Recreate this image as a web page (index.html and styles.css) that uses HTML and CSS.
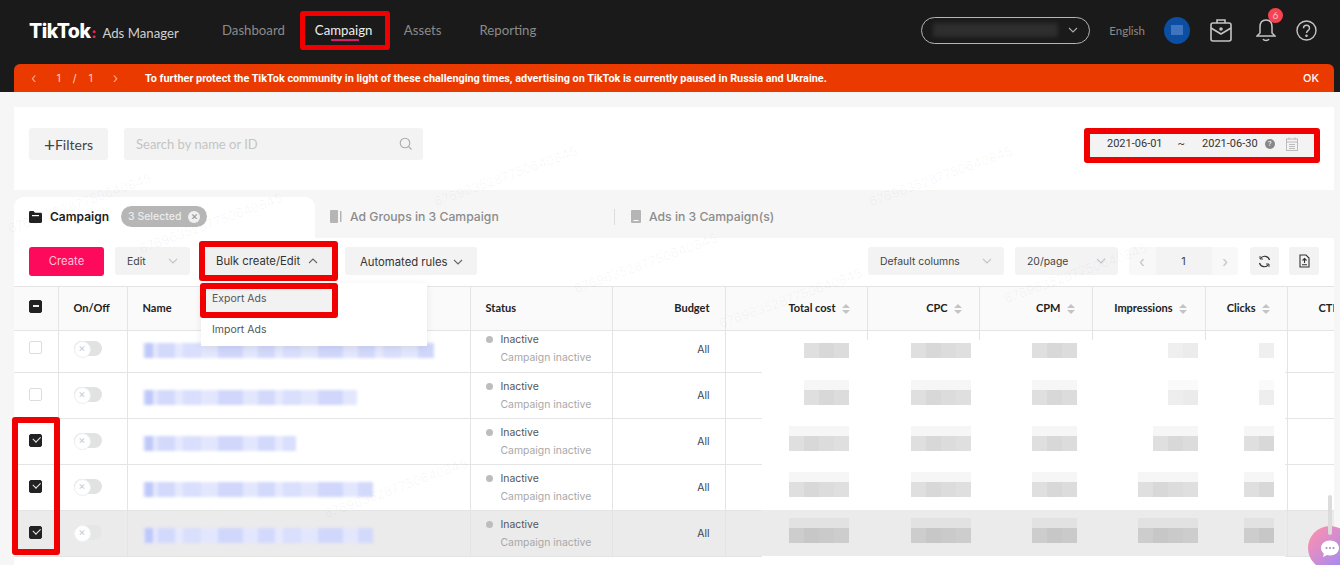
FILE: index.html
```html
<!DOCTYPE html>
<html lang="en">
<head>
    <meta charset="UTF-8">
    <title>TikTok Ads Manager - Campaign</title>
    <link rel="stylesheet" href="styles.css">
</head>
<body>
    <div class="top-wrap">
        <div class="topbar">
            <div class="logo"><b>TikTok</b><span class="logo-dot">:</span><span class="logo-sub">Ads Manager</span></div>
            <nav class="nav">
                <a>Dashboard</a>
                <a class="nav-active marked"><span>Campaign</span></a>
                <a>Assets</a>
                <a>Reporting</a>
            </nav>
            <div class="top-right">
                <div class="account">
                    <span class="account-blur"></span>
                    <svg width="10" height="6" viewBox="0 0 10 6"><path d="M1 1l4 4 4-4" fill="none" stroke="#aaa" stroke-width="1.1"/></svg>
                </div>
                <span class="lang">English</span>
                <span class="avatar"><i></i></span>
                <svg class="ic-case" width="24" height="26" viewBox="0 0 24 26" fill="none" stroke="#c4c4c4" stroke-width="1.6"><path d="M8 6V3h8v3"/><rect x="2" y="6" width="20" height="18" rx="2"/><path d="M2 11l10 6 10-6"/><circle cx="12" cy="12" r="1" fill="#c4c4c4"/></svg>
                <span class="bell">
                    <svg width="20" height="26" viewBox="0 0 20 26" fill="none" stroke="#c4c4c4" stroke-width="1.5"><path d="M10 3c-4 0-6 3-6 7v6l-3 3h18l-3-3v-6c0-4-2-7-6-7z"/><path d="M7 22c1 2 5 2 6 0"/></svg>
                    <em>6</em>
                </span>
                <svg class="ic-help" width="21" height="21" viewBox="0 0 21 21" fill="none" stroke="#c4c4c4" stroke-width="1.4"><circle cx="10.5" cy="10.5" r="9.5"/><path d="M7.5 8.2c0-4 6-4 6 0 0 2.400-3 2.400-3 4.800"/><circle cx="10.500" cy="15.800" r=".6" fill="#c4c4c4"/></svg>
            </div>
        </div>
        <div class="notice">
            <div class="notice-pager"><span>&lsaquo;</span><span>1</span><span>/</span><span>1</span><span>&rsaquo;</span></div>
            <p>To further protect the TikTok community in light of these challenging times, advertising on TikTok is currently paused in Russia and Ukraine.</p>
            <b>OK</b>
        </div>
    </div>

    <main class="content">
        <section class="filter-card">
            <button class="filters-btn"><span>+</span>Filters</button>
            <div class="search">
                <span>Search by name or ID</span>
                <svg width="14" height="14" viewBox="0 0 14 14" fill="none" stroke="#aaa" stroke-width="1.1"><circle cx="6" cy="6" r="4.800"/><path d="M9.500 9.500l3 3"/></svg>
            </div>
            <div class="date-range marked">
                <span>2021-06-01</span>
                <span class="tilde">~</span>
                <span>2021-06-30</span>
                <i class="date-q">?</i>
                <svg width="12" height="14" viewBox="0 0 12 14" fill="none" stroke="#b5b5b5" stroke-width=".9"><rect x=".5" y="2" width="11" height="11.500"/><path d="M.5 5h11M3 .5v2M9 .5v2M3 7.500h6M3 9.500h6M3 11.500h6"/></svg>
            </div>
        </section>

        <div class="tabs">
            <div class="tab tab-active">
                <svg width="13" height="12" viewBox="0 0 13 12"><path d="M0 1.500C0 .7.600 0 1.400 0h3.100l1.500 1.800h5.600c.8 0 1.400.6 1.400 1.400v7.400c0 .8-.6 1.400-1.400 1.400H1.400C.6 12 0 11.400 0 10.600z" fill="#222"/><rect x="3" y="4" width="7" height="1.200" fill="#fff"/></svg>
                <span>Campaign</span>
                <span class="pill">3 Selected <i>&times;</i></span>
            </div>
            <div class="tab tab-groups">
                <svg width="12" height="13" viewBox="0 0 12 13"><rect width="8" height="13" rx="1" fill="#b5b5b5"/><rect x="10" y="1" width="1.500" height="11" fill="#b5b5b5"/></svg>
                <span>Ad Groups in 3 Campaign</span>
            </div>
            <div class="tab tab-ads">
                <svg width="10" height="13" viewBox="0 0 10 13"><rect width="10" height="13" rx="1" fill="#b5b5b5"/><rect x="2.500" y="10" width="5" height="1" fill="#fff"/></svg>
                <span>Ads in 3 Campaign(s)</span>
            </div>
        </div>

        <div class="toolbar">
            <button class="btn-create">Create</button>
            <div class="select select-edit"><span>Edit</span><svg class="chev" viewBox="0 0 10 6"><path d="M1 1l4 4 4-4"/></svg></div>
            <div class="bulk">
                <div class="bulk-btn marked"><span>Bulk create/Edit</span><svg class="chev chev-dark" viewBox="0 0 10 6"><path d="M1 5l4-4 4 4"/></svg></div>
                <div class="dropdown">
                    <div class="drop-item drop-export marked">Export Ads</div>
                    <div class="drop-item">Import Ads</div>
                </div>
            </div>
            <div class="select select-rules"><span>Automated rules</span><svg class="chev chev-dark" viewBox="0 0 10 6"><path d="M1 1l4 4 4-4"/></svg></div>
            <div class="tool-right">
                <div class="select select-cols"><span>Default columns</span><svg class="chev" viewBox="0 0 10 6"><path d="M1 1l4 4 4-4"/></svg></div>
                <div class="select select-page"><span>20/page</span><svg class="chev" viewBox="0 0 10 6"><path d="M1 1l4 4 4-4"/></svg></div>
                <div class="pager"><span>&lsaquo;</span><b>1</b><span>&rsaquo;</span></div>
                <div class="icon-btn">
                    <svg width="13" height="13" viewBox="0 0 13 13" fill="none" stroke="#333" stroke-width="1.200"><path d="M11.500 5A5 5 0 0 0 2.500 3.500M1.500 8a5 5 0 0 0 9 1.500"/><path d="M2 1v3h3M11 12V9H8" stroke-width=".9"/></svg>
                </div>
                <div class="icon-btn">
                    <svg width="11" height="14" viewBox="0 0 11 14" fill="none" stroke="#333" stroke-width="1.100"><path d="M1 1h6l3 3v9H1z"/><path d="M5.500 4v5M3.500 6.500l2-2 2 2M3 10.800h5"/></svg>
                </div>
            </div>
        </div>

        <div class="table-wrap">
            <table class="grid">
                <colgroup>
                    <col class="c-check"><col class="c-onoff"><col class="c-name"><col class="c-status"><col class="c-budget">
                    <col class="c-cost"><col class="c-cpc"><col class="c-cpm"><col class="c-imp"><col class="c-clicks"><col class="c-ctr">
                </colgroup>
                <thead>
                    <tr>
                        <th><span class="box box-on box-dash"></span></th>
                        <th>On/Off</th>
                        <th>Name</th>
                        <th>Status</th>
                        <th class="num">Budget</th>
                        <th class="num">Total cost<i class="sort"></i></th>
                        <th class="num">CPC<i class="sort"></i></th>
                        <th class="num">CPM<i class="sort"></i></th>
                        <th class="num">Impressions<i class="sort"></i></th>
                        <th class="num">Clicks<i class="sort"></i></th>
                        <th class="ctr">CTR</th>
                    </tr>
                </thead>
                <tbody>
                    <tr>
                        <td><span class="box"></span></td>
                        <td><span class="toggle"></span></td>
                        <td><div class="name-blur w-291"></div></td>
                        <td><div class="status"><b>Inactive</b><small>Campaign inactive</small></div></td>
                        <td class="num">All</td>
                        <td><div class="mosaic w-45"></div></td>
                        <td><div class="mosaic w-60"></div></td>
                        <td><div class="mosaic w-45"></div></td>
                        <td><div class="mosaic w-30 faint"></div></td>
                        <td><div class="mosaic w-15 faint"></div></td>
                        <td></td>
                    </tr>
                    <tr>
                        <td><span class="box"></span></td>
                        <td><span class="toggle"></span></td>
                        <td><div class="name-blur w-214"></div></td>
                        <td><div class="status"><b>Inactive</b><small>Campaign inactive</small></div></td>
                        <td class="num">All</td>
                        <td><div class="mosaic w-45"></div></td>
                        <td><div class="mosaic w-60"></div></td>
                        <td><div class="mosaic w-45"></div></td>
                        <td><div class="mosaic w-30 faint"></div></td>
                        <td><div class="mosaic w-15 faint"></div></td>
                        <td></td>
                    </tr>
                    <tr>
                        <td><span class="box box-on"></span></td>
                        <td><span class="toggle"></span></td>
                        <td><div class="name-blur w-153"></div></td>
                        <td><div class="status"><b>Inactive</b><small>Campaign inactive</small></div></td>
                        <td class="num">All</td>
                        <td><div class="mosaic w-60"></div></td>
                        <td><div class="mosaic w-60"></div></td>
                        <td><div class="mosaic w-45"></div></td>
                        <td><div class="mosaic w-45"></div></td>
                        <td><div class="mosaic w-30"></div></td>
                        <td></td>
                    </tr>
                    <tr>
                        <td><span class="box box-on"></span></td>
                        <td><span class="toggle"></span></td>
                        <td><div class="name-blur w-230"></div></td>
                        <td><div class="status"><b>Inactive</b><small>Campaign inactive</small></div></td>
                        <td class="num">All</td>
                        <td><div class="mosaic w-60"></div></td>
                        <td><div class="mosaic w-60"></div></td>
                        <td><div class="mosaic w-45"></div></td>
                        <td><div class="mosaic w-60"></div></td>
                        <td><div class="mosaic w-30"></div></td>
                        <td></td>
                    </tr>
                    <tr class="row-hover">
                        <td><span class="box box-on"></span></td>
                        <td><span class="toggle"></span></td>
                        <td><div class="name-blur w-230"></div></td>
                        <td><div class="status"><b>Inactive</b><small>Campaign inactive</small></div></td>
                        <td class="num">All</td>
                        <td><div class="mosaic w-60"></div></td>
                        <td><div class="mosaic w-60"></div></td>
                        <td><div class="mosaic w-45"></div></td>
                        <td><div class="mosaic w-60"></div></td>
                        <td><div class="mosaic w-30"></div></td>
                        <td></td>
                    </tr>
                </tbody>
            </table>
            <div class="patch"></div>
            <div class="scroll-thumb"></div>
        </div>
    </main>

    <!-- annotation box round the three checked rows -->
    <div class="checks-mark"></div>

    <div class="watermarks">
        <span class="wm wm-a">6769635287750640845</span>
        <span class="wm wm-b">6769635287750640845</span>
        <span class="wm wm-c">6769635287750640845</span>
        <span class="wm wm-d">6769635287750640845</span>
        <span class="wm wm-e">6769635287750640845</span>
        <span class="wm wm-f">6769635287750640845</span>
        <span class="wm wm-g">6769635287750640845</span>
        <span class="wm wm-h">6769635287750640845</span>
    </div>

    <div class="chat">
        <svg width="20" height="20" viewBox="0 0 20 20"><path d="M10 1.500c5 0 9 3 9 7.500s-4 7.500-9 7.500c-1 0-2-.1-3-.4L3 18l.8-3.500C2 13 1 11.200 1 9c0-4.500 4-7.500 9-7.500z" fill="#fff"/><circle cx="6.500" cy="9" r="1.100" fill="#a78bd8"/><circle cx="10" cy="9" r="1.100" fill="#a78bd8"/><circle cx="13.500" cy="9" r="1.100" fill="#a78bd8"/></svg>
    </div>
</body>
</html>
```

FILE: styles.css
```css
:root {
    --red-mark: #f00000;
    --line: #e4e4e4;
    --chip: #f3f3f3;
}

* {
    box-sizing: border-box;
}

html, body {
    height: 565px;
    overflow: hidden;
}

body {
    margin: 0;
    position: relative;
    background: #f6f6f6;
    color: #222;
    font-family: Inter, "Liberation Sans", sans-serif;
    font-size: 11px;
}

.marked {
    border: 5px solid var(--red-mark);
    border-radius: 3px;
}

/* top bar */
.top-wrap {
    background: #1a1a1a;
}

.topbar {
    height: 64px;
    display: flex;
    align-items: center;
    padding: 0 23px 4px 29px;
    font-family: Lato, sans-serif;
}

.logo {
    width: 193px;
    color: #fff;
    display: flex;
    align-items: baseline;
    font-family: Inter, sans-serif;
    padding-top: 2px;
}

.logo b {
    font-size: 19.500px;
    font-weight: 800;
    letter-spacing: -0.5px;
}

.logo-dot {
    color: #f2295b;
    font-weight: 800;
    font-size: 14px;
    margin: 0 6px 0 1px;
}

.logo-sub {
    font-family: Lato, sans-serif;
    font-size: 13.200px;
    color: #d0d0d0;
}

.nav {
    display: flex;
    align-items: center;
    font-size: 13.200px;
    color: #8a8a8a;
}

.nav a {
    margin-right: 38px;
}

.nav a:first-child {
    margin-right: 15px;
}

.nav .nav-active {
    width: 90px;
    height: 39px;
    margin-right: 14px;
    padding: 0 0 0 10px;
    color: #eee;
    display: flex;
    align-items: center;
    position: relative;
}

.nav-active::after {
    content: "";
    position: absolute;
    left: 26px;
    bottom: 4px;
    width: 28px;
    height: 2px;
    background: #d81f6c;
}

.top-right {
    margin-left: auto;
    display: flex;
    align-items: center;
    color: #8a8a8a;
}

.account {
    width: 169px;
    height: 27px;
    border: 1px solid #b5b5b5;
    border-radius: 14px;
    display: flex;
    align-items: center;
    justify-content: space-between;
    padding: 0 11px 0 11px;
}

.account-blur {
    width: 125px;
    height: 14px;
    background: #2e2e2e;
    filter: blur(2px);
}

.lang {
    margin-left: 19px;
    font-size: 11.500px;
}

.avatar {
    width: 26px;
    height: 27px;
    margin-left: 19px;
    border-radius: 50%;
    background: #0b4ea2;
    display: flex;
    align-items: center;
    justify-content: center;
}

.avatar i {
    width: 12px;
    height: 10px;
    background: #3f74c0;
}

.ic-case {
    margin-left: 19px;
}

.bell {
    position: relative;
    margin-left: 23px;
    height: 26px;
}

.bell em {
    position: absolute;
    top: -9px;
    left: 12px;
    width: 15px;
    height: 15px;
    border-radius: 50%;
    background: #f5444f;
    color: #fbd;
    font-style: normal;
    font-size: 10px;
    line-height: 15px;
    text-align: center;
}

.ic-help {
    margin-left: 20px;
}

/* notice */
.notice {
    height: 28px;
    margin: 0 6px 0 14px;
    padding: 0 15px 0 17px;
    background: #ea3a00;
    border-radius: 6px 6px 0 0;
    color: #fff;
    display: flex;
    align-items: center;
}

.notice-pager {
    width: 114px;
    display: flex;
    gap: 12px;
    color: #ffd4c2;
    font-size: 10.500px;
}

.notice-pager span:first-child {
    margin-right: 8px;
    font-size: 14px;
    line-height: 12px;
    opacity: .7;
}

.notice-pager span:last-child {
    margin-left: 8px;
    font-size: 14px;
    line-height: 12px;
    opacity: .7;
}

.notice p {
    margin: 0;
    font-family: Roboto, sans-serif;
    font-size: 10.850px;
    font-weight: 700;
}

.notice b {
    margin-left: auto;
    font-weight: 500;
}

/* filter card */
.content {
    padding: 15px 6px 0 14px;
}

.filter-card {
    height: 83px;
    background: #fff;
    display: flex;
    align-items: flex-start;
    padding: 21px 14px 0 15px;
}

.filters-btn {
    width: 79px;
    height: 32px;
    border: none;
    border-radius: 3px;
    background: var(--chip);
    color: #444;
    font-family: Lato, sans-serif;
    font-size: 14px;
    padding: 1px 0 0;
}

.filters-btn span {
    font-size: 19px;
    line-height: 14px;
    vertical-align: -2px;
}

.search {
    width: 299px;
    height: 32px;
    margin-left: 16px;
    padding: 0 10px 0 12px;
    border-radius: 3px;
    background: var(--chip);
    color: #c4c4c4;
    font-family: Lato, sans-serif;
    font-size: 13px;
    display: flex;
    align-items: center;
    justify-content: space-between;
}

.date-range {
    width: 236px;
    height: 35px;
    margin-left: auto;
    padding: 0 0 4px 17px;
    background: #f3f3f3;
    border-width: 6px;
    display: flex;
    align-items: center;
    color: #333;
    font-family: Roboto, sans-serif;
}

.tilde {
    margin: 0 17px 0 15px;
}

.date-q {
    width: 10px;
    height: 10px;
    margin: 0 11px 0 7px;
    border-radius: 50%;
    background: #888;
    color: #fff;
    font-size: 8px;
    font-style: normal;
    line-height: 10px;
    text-align: center;
}

/* tabs */
.tabs {
    height: 41px;
    margin-top: 7px;
    padding-bottom: 0;
    display: flex;
    align-items: center;
    color: #8c8c8c;
    font-size: 12.200px;
    font-weight: 500;
}

.tab {
    display: flex;
    align-items: center;
    height: 100%;
    padding-bottom: 2px;
}

.tab span {
    margin-left: 8px;
}

.tab-active {
    width: 301px;
    padding-left: 15px;
    background: #fff;
    border-radius: 10px 10px 0 0;
    color: #222;
    font-size: 12px;
    font-weight: 600;
}

.tab-active svg {
    margin-top: 1px;
}

.tab .pill {
    margin-left: 12px;
    height: 21px;
    width: 86px;
    padding-left: 7px;
    border-radius: 11px;
    background: #b6b6b6;
    color: #ececec;
    font-size: 10.500px;
    font-weight: 500;
    display: flex;
    align-items: center;
}

.pill i {
    width: 12px;
    height: 12px;
    margin-left: 7px;
    border-radius: 50%;
    background: #f0f0f0;
    color: #999;
    font-style: normal;
    font-size: 11px;
    line-height: 11px;
    text-align: center;
}

.tab-groups {
    width: 284px;
    margin-left: 15px;
}

.tab-ads {
    padding-left: 17px;
    position: relative;
}

.tab-ads::before {
    content: "";
    position: absolute;
    left: 0;
    top: 12px;
    height: 16px;
    border-left: 1px solid #dcdcdc;
}

/* toolbar */
.toolbar {
    height: 48px;
    background: #fff;
    display: flex;
    align-items: center;
    padding: 0 15px 2px;
    font-size: 11.300px;
}

.btn-create {
    width: 75px;
    height: 29px;
    border: none;
    border-radius: 3px;
    background: #fe0a5c;
    color: #ffc4d8;
    font-family: inherit;
    font-size: 11.300px;
}

.select {
    height: 28px;
    margin-left: 11px;
    padding: 0 12px;
    border-radius: 3px;
    background: var(--chip);
    color: #444;
    display: flex;
    align-items: center;
    justify-content: space-between;
    white-space: nowrap;
}

.chev {
    width: 10px;
    height: 6px;
    flex: none;
    fill: none;
    stroke: #c4c4c4;
    stroke-width: 1.100;
}

.chev-dark {
    stroke: #666;
}

.select-edit {
    width: 75px;
    font-size: 10.500px;
}

.bulk {
    position: relative;
    margin-left: 9px;
}

.bulk-btn {
    width: 139px;
    height: 40px;
    border-width: 6px;
    padding: 0 14px 0 11px;
    background: #f0f0f0;
    color: #333;
    display: flex;
    align-items: center;
    justify-content: space-between;
}

.dropdown {
    position: absolute;
    z-index: 5;
    top: 42px;
    left: 2px;
    width: 226px;
    padding-bottom: 2px;
    background: #fff;
    color: #555;
    font-size: 10.500px;
    box-shadow: 0 2px 8px rgba(0,0,0,.08);
}

.drop-item {
    height: 30px;
    padding-left: 11px;
    display: flex;
    align-items: center;
}

.drop-item.drop-export {
    width: 138px;
    height: 35px;
    margin: 0 0 -4px -1px;
    padding: 0 0 4px 6px;
    border-width: 6px;
    background: #f2f2f2;
}

.select-rules {
    width: 132px;
    margin-left: 7px;
    padding: 2px 10px 0 15px;
    color: #333;
    justify-content: flex-start;
    gap: 5px;
}

.tool-right {
    margin-left: auto;
    display: flex;
    align-items: center;
    font-size: 10.400px;
}

.select-cols {
    width: 136px;
    margin-left: 0;
}

.select-page {
    width: 103px;
}

.pager {
    width: 109px;
    height: 28px;
    margin-left: 11px;
    border-radius: 3px;
    background: #f8f8f8;
    color: #c4c4c4;
    font-size: 15px;
    display: flex;
    align-items: center;
    justify-content: space-between;
    padding: 0 10px;
}

.pager b {
    width: 56px;
    height: 100%;
    background: var(--chip);
    color: #444;
    font-size: 11px;
    font-weight: 400;
    line-height: 28px;
    text-align: center;
}

.icon-btn {
    width: 29px;
    height: 28px;
    margin-left: 12px;
    border-radius: 3px;
    background: var(--chip);
    display: flex;
    align-items: center;
    justify-content: center;
}

.icon-btn:last-child {
    width: 30px;
    margin-left: 10px;
}

/* table */
.table-wrap {
    position: relative;
    height: 279px;
    overflow: hidden;
    background: #fff;
}

.grid {
    width: 1320px;
    table-layout: fixed;
    border-collapse: collapse;
}

.c-check { width: 44px; }
.c-onoff { width: 69px; }
.c-name { width: 343px; }
.c-status { width: 142px; }
.c-budget { width: 113px; }
.c-cost { width: 142px; }
.c-cpc { width: 112px; }
.c-cpm { width: 113px; }
.c-imp { width: 113px; }
.c-clicks { width: 82px; }
.c-ctr { width: 47px; }

.grid th, .grid td {
    border: 1px solid var(--line);
    border-left: none;
    padding: 0 0 0 15px;
    text-align: left;
}

.grid th:last-child, .grid td:last-child {
    border-right: none;
}

.grid th {
    height: 44px;
    padding-bottom: 2px;
    background: #fafafa;
    font-family: Lato, sans-serif;
    font-size: 11px;
    font-weight: 700;
    white-space: nowrap;
}

.grid td {
    height: 46px;
    padding-top: 0;
    font-size: 10.400px;
    color: #444;
}

.grid tbody tr:first-child td {
    height: 41px;
    padding-bottom: 5px;
    border-top: none;
}

.grid .num {
    text-align: right;
    padding: 0 15px 0 0;
}

.grid th.num {
    padding-bottom: 2px;
}

.grid .ctr {
    padding-left: 31px;
}

.sort {
    display: inline-flex;
    flex-direction: column;
    gap: 2px;
    width: 8px;
    margin-left: 6px;
    vertical-align: middle;
}

.sort::before, .sort::after {
    content: "";
    border-left: 4px solid transparent;
    border-right: 4px solid transparent;
}

.sort::before {
    border-bottom: 4px solid #c4c4c4;
}

.sort::after {
    border-top: 4px solid #c4c4c4;
}

.grid th:nth-child(6) { padding-right: 17px; }
.grid th:nth-child(7) { padding-right: 17px; }
.grid th:nth-child(8) { padding-right: 17px; }
.grid th:nth-child(9) { padding-right: 18px; }
.grid th:nth-child(10) { padding-right: 17px; }

.box {
    display: block;
    width: 13px;
    height: 13px;
    border: 1px solid #ddd;
    border-radius: 2px;
    background: #fff;
    margin-top: -3px;
}

.box-on {
    background: #222;
    border-color: #222;
    position: relative;
}

.box-on::after {
    content: "";
    position: absolute;
    left: 3px;
    top: 1.500px;
    width: 6px;
    height: 3.500px;
    border-left: 1.300px solid #eee;
    border-bottom: 1.300px solid #eee;
    transform: rotate(-45deg);
}

.box-dash::after {
    left: 2.500px;
    top: 4.500px;
    width: 6px;
    height: 2px;
    border: none;
    background: #eee;
    transform: none;
}

.toggle {
    display: block;
    width: 28px;
    height: 15px;
    border-radius: 8px;
    background: #e2e2e2;
    position: relative;
    margin-top: -2px;
}

.toggle::after {
    content: "\00d7";
    position: absolute;
    left: 0;
    top: 0;
    width: 15px;
    height: 15px;
    border-radius: 50%;
    background: #fff;
    border: 1px solid #eee;
    color: #ccc;
    font-size: 11px;
    line-height: 12px;
    text-align: center;
}

.name-blur {
    height: 15px;
    margin-top: 3px;
    background:
        linear-gradient(#bfc9f9, #bfc9f9) 2px 0 / 8px 100% no-repeat,
        repeating-linear-gradient(90deg, #e3e7fd 0 15px, #d2d9fb 15px 32px, #e6e9fd 32px 40px, #d9dffc 40px 58px, #e3e7fd 58px 75px, #d0d7fb 75px 100px);
    filter: blur(1.500px);
}

.w-291 { width: 291px; }
.w-230 { width: 230px; }
.w-214 { width: 214px; }
.w-153 { width: 153px; }

.status {
    position: relative;
    padding-left: 15px;
    line-height: 18px;
}

.status::before {
    content: "";
    position: absolute;
    left: 0;
    top: 5px;
    width: 7px;
    height: 7px;
    border-radius: 50%;
    background: #bdbdbd;
}

.status b {
    display: block;
    font-weight: 400;
    color: #555;
}

.status small {
    display: block;
    font-size: 10.400px;
    color: #a8a8a8;
}

.grid td .mosaic {
    position: relative;
    z-index: 2;
    height: 15px;
    margin: 3px 0 0 auto;
    background: repeating-linear-gradient(90deg, #dfdfdf 0 15px, #d8d8d8 15px 30px, #dcdcdc 30px 45px);
    box-shadow: 0 -10px 0 #f6f6f6;
}

.grid tbody tr:first-child .mosaic {
    box-shadow: none;
}

.mosaic.faint {
    opacity: .5;
}

.w-15 { width: 15px; }
.w-30 { width: 30px; }
.w-45 { width: 45px; }
.w-60 { width: 60px; }

.grid td:nth-child(6) { padding: 0 18px 0 0; }
.grid td:nth-child(7) { padding: 0 8px 0 0; }
.grid td:nth-child(8) { padding: 0 15px 0 0; }
.grid td:nth-child(9) { padding: 0 7px 0 0; }
.grid td:nth-child(10) { padding: 0 13px 0 0; }

.row-hover td {
    background: #ebebeb;
}

.row-hover .mosaic {
    filter: brightness(.92);
}

.row-hover .toggle {
    background: #e6e6e6;
}

.row-hover .toggle::after {
    border-color: #f2f2f2;
}

/* the white cover over the metric columns */
.patch {
    position: absolute;
    z-index: 1;
    left: 748px;
    top: 54px;
    width: 523px;
    height: 225px;
    background: linear-gradient(#fff 170px, #ebebeb 170px 216px, #fff 216px);
}

.scroll-thumb {
    position: absolute;
    z-index: 2;
    right: 2px;
    top: 209px;
    width: 4px;
    height: 40px;
    border-radius: 2px;
    background: #dcdcdc;
}

.checks-mark {
    position: absolute;
    left: 12px;
    top: 417px;
    width: 48px;
    height: 138px;
    border: 6px solid var(--red-mark);
    border-radius: 3px;
}

.watermarks {
    position: absolute;
    inset: 0;
    overflow: hidden;
    pointer-events: none;
}

.wm {
    position: absolute;
    font-size: 13px;
    color: rgba(0,0,0,.04);
    white-space: nowrap;
    transform: rotate(-20deg);
}

.wm-a { left: 4px; top: 195px; }
.wm-b { left: 135px; top: 215px; }
.wm-c { left: 430px; top: 168px; }
.wm-d { left: 865px; top: 168px; }
.wm-e { left: 570px; top: 255px; }
.wm-f { left: 715px; top: 290px; }
.wm-g { left: 1000px; top: 265px; }
.wm-h { left: 320px; top: 480px; }

.chat {
    position: absolute;
    left: 1308px;
    top: 526px;
    width: 44px;
    height: 44px;
    border-radius: 50%;
    background: linear-gradient(135deg, #f08fb8 20%, #a78bf0 80%);
    padding: 13px 0 0 12px;
}
```
